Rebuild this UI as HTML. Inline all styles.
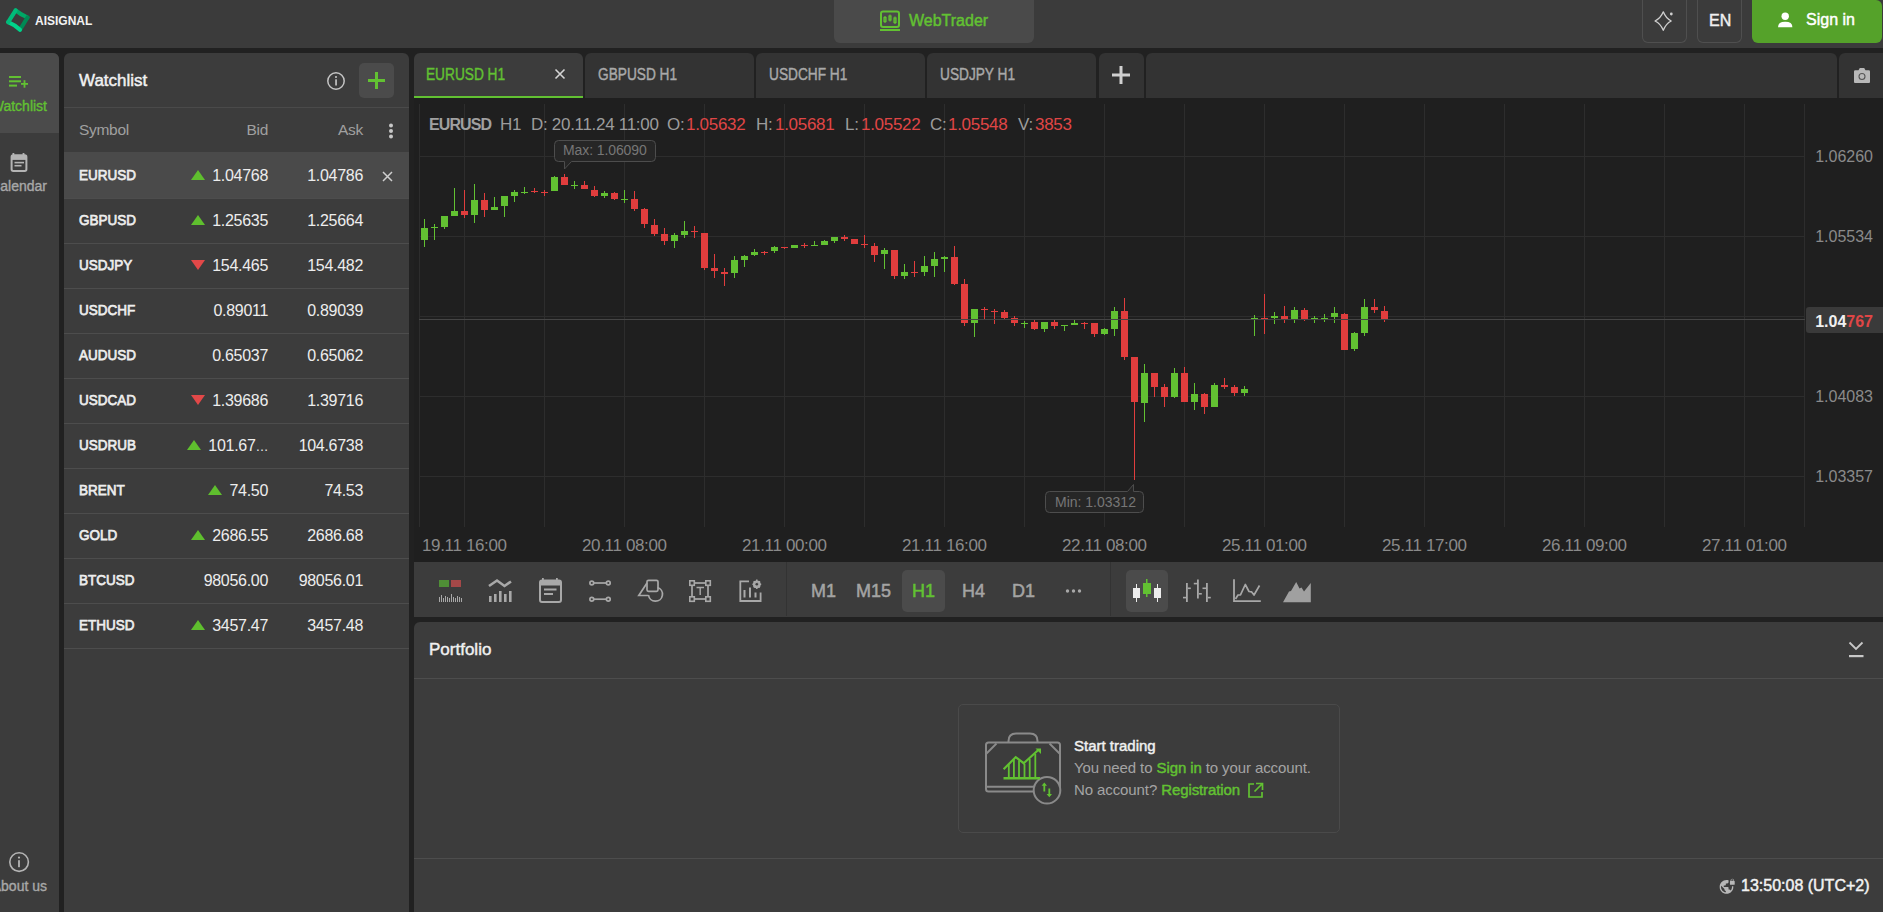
<!DOCTYPE html>
<html><head><meta charset="utf-8"><title>WebTrader</title>
<style>
*{box-sizing:border-box;margin:0;padding:0}
html,body{width:1883px;height:912px;overflow:hidden;background:#212121;font-family:"Liberation Sans",sans-serif;color:#e8e8e8}
.a{position:absolute}
.nw{white-space:nowrap}
.g{color:#62c132}
.topbar{left:0;top:0;width:1883px;height:48px;background:#3b3b3b}
.btnb{border:1px solid #4f4f4f;border-top:none;border-radius:0 0 6px 6px}
.side{left:0;top:53px;width:59px;height:859px;background:#3c3c3c;border-radius:0 6px 0 0;overflow:hidden}
.sitem{left:0;width:59px;height:80px}
.slabel{right:12px;font-size:14px;color:#a8a8a8;white-space:nowrap;text-align:right;-webkit-text-stroke:0.35px currentColor}
.wl{left:64px;top:53px;width:345px;height:859px;background:#3c3c3c;border-radius:6px 6px 0 0}
.row{left:0;width:345px;height:45px;border-bottom:1px solid #4a4a4a}
.sym{left:15px;top:14px;font-weight:bold;font-size:14px;letter-spacing:-0.35px;color:#ececec}
.bid{right:141px;top:14px;font-size:15px;color:#ececec;text-align:right}
.ask{right:46px;top:14px;font-size:15px;color:#ececec;text-align:right}
.tri-up{width:0;height:0;border-left:6px solid transparent;border-right:6px solid transparent;border-bottom:9px solid #5fbf2e}
.tri-dn{width:0;height:0;border-left:6px solid transparent;border-right:6px solid transparent;border-top:9px solid #e04545}
.tab{top:53px;height:45px;background:#333333;border-radius:6px 6px 0 0}
.tabt{left:13px;top:14px;font-size:15px;font-weight:bold;letter-spacing:-0.3px;color:#a9a9a9;white-space:nowrap}
.chart{left:414px;top:98px;width:1469px;height:464px;background:#1f1f1f}
.tool{left:414px;top:562px;width:1469px;height:55px;background:#3c3c3c}
.port{left:414px;top:622px;width:1469px;height:290px;background:#3c3c3c;border-radius:6px 0 0 0}
</style></head><body>
<div class="a topbar">
 <svg class="a" style="left:4px;top:6px" width="30" height="30" viewBox="0 0 30 30">
  <path d="M11.6 4.3 Q 16.5 8.3 23.5 11.5" stroke="#00a866" stroke-width="4.1" fill="none" stroke-linecap="round"/>
  <path d="M23.5 11.5 L 16 23.8" stroke="#008a55" stroke-width="4.1" fill="none" stroke-linecap="round"/>
  <path d="M16 23.8 Q 11 19 4.2 16.2" stroke="#00d28a" stroke-width="4.1" fill="none" stroke-linecap="round"/>
  <path d="M4.2 16.2 L 11.6 4.3" stroke="#00bb7a" stroke-width="4.1" fill="none" stroke-linecap="round"/>
 </svg>
 <div class="a nw" style="left:35px;top:14px;font-size:12px;font-weight:bold;color:#f2f2f2;letter-spacing:0px">AISIGNAL</div>
 <div class="a" style="left:834px;top:0;width:200px;height:43px;background:#4a4a4a;border-radius:0 0 6px 6px"></div>
 <svg class="a" style="left:879px;top:10px" width="22" height="22" viewBox="0 0 22 22">
  <rect x="2" y="1.5" width="18" height="15.5" rx="2" fill="none" stroke="#62c132" stroke-width="2"/>
  <rect x="1" y="19" width="20" height="2" fill="#62c132"/>
  <line x1="6" y1="6" x2="6" y2="13" stroke="#62c132" stroke-width="1.2"/><rect x="5" y="7.5" width="2" height="4" fill="none" stroke="#62c132" stroke-width="1.2"/>
  <line x1="11" y1="4.5" x2="11" y2="11.5" stroke="#62c132" stroke-width="1.2"/><rect x="10" y="6" width="2" height="4" fill="none" stroke="#62c132" stroke-width="1.2"/>
  <line x1="16" y1="6.5" x2="16" y2="14" stroke="#62c132" stroke-width="1.2"/><rect x="15" y="8" width="2" height="4.5" fill="none" stroke="#62c132" stroke-width="1.2"/>
 </svg>
 <div class="a nw g" style="left:909px;top:12px;font-size:16px;-webkit-text-stroke:0.45px currentColor;letter-spacing:0px">WebTrader</div>
 <div class="a btnb" style="left:1642px;top:0;width:45px;height:43px"></div>
 <svg class="a" style="left:1652px;top:10px" width="24" height="24" viewBox="0 0 24 24">
  <path d="M11.3 1.8 Q 13.9 8.4 19.2 11 Q 13.9 13.6 11.3 20.3 Q 8.6 13.6 3 11 Q 8.6 8.4 11.3 1.8 Z" fill="none" stroke="#cfcfcf" stroke-width="1.3" stroke-linejoin="round"/>
  <circle cx="19.3" cy="4" r="1.4" fill="#cfcfcf"/>
 </svg>
 <div class="a btnb" style="left:1697px;top:0;width:45px;height:43px"></div>
 <div class="a nw" style="left:1709px;top:12px;font-size:16px;-webkit-text-stroke:0.45px currentColor;color:#f0f0f0">EN</div>
 <div class="a" style="left:1752px;top:0;width:130px;height:43px;background:#55a22a;border-radius:0 6px 6px 6px"></div>
 <svg class="a" style="left:1776px;top:12px" width="18" height="17" viewBox="0 0 18 17">
  <circle cx="9.2" cy="4.3" r="3.7" fill="#fff"/>
  <path d="M2 15.2 Q 2 9.8 9.2 9.8 Q 16.4 9.8 16.4 15.2 Z" fill="#fff"/>
 </svg>
 <div class="a nw" style="left:1806px;top:11px;font-size:16px;-webkit-text-stroke:0.45px currentColor;color:#fff">Sign in</div>
</div>
<div class="a side">
 <div class="a sitem" style="top:0;background:#4b4b4b"></div>
 <svg class="a" style="left:8px;top:22px" width="22" height="14" viewBox="0 0 22 14">
  <rect x="1" y="1" width="12" height="2" fill="#62c132"/>
  <rect x="1" y="5.3" width="12" height="2" fill="#62c132"/>
  <rect x="1" y="9.6" width="8" height="2" fill="#62c132"/>
  <rect x="13" y="8" width="7" height="1.8" fill="#62c132"/>
  <rect x="15.6" y="5.2" width="1.8" height="7.5" fill="#62c132"/>
 </svg>
 <div class="a slabel g" style="top:45px;font-size:14px;right:12px;color:#62c132">Watchlist</div>
 <svg class="a" style="left:9px;top:99px" width="20" height="22" viewBox="0 0 20 22">
  <rect x="3.5" y="1" width="1.8" height="3" fill="#b4b4b4"/><rect x="13.6" y="1" width="1.8" height="3" fill="#b4b4b4"/>
  <rect x="2.6" y="3.3" width="14.8" height="15.6" rx="1.6" fill="none" stroke="#b4b4b4" stroke-width="2"/>
  <rect x="2.6" y="3.3" width="14.8" height="4.6" fill="#b4b4b4"/>
  <rect x="5.5" y="9.8" width="9.5" height="1.6" fill="#b4b4b4"/><rect x="5.5" y="12.9" width="7" height="1.6" fill="#b4b4b4"/>
 </svg>
 <div class="a slabel" style="top:125px">Calendar</div>
 <svg class="a" style="left:8px;top:798px" width="22" height="22" viewBox="0 0 22 22">
  <circle cx="11.1" cy="11.1" r="9.3" fill="none" stroke="#b4b4b4" stroke-width="1.6"/>
  <rect x="10.1" y="9.2" width="1.8" height="7" fill="#b4b4b4"/><circle cx="11" cy="6.6" r="1.1" fill="#b4b4b4"/>
 </svg>
 <div class="a slabel" style="top:825px">About us</div>
</div>
<div class="a wl">
 <div class="a nw" style="left:15px;top:18px;font-size:17px;-webkit-text-stroke:0.45px currentColor;color:#f2f2f2">Watchlist</div>
 <svg class="a" style="left:262px;top:18px" width="20" height="20" viewBox="0 0 20 20">
  <circle cx="10" cy="10" r="8.2" fill="none" stroke="#c4c4c4" stroke-width="1.5"/>
  <rect x="9.2" y="8.3" width="1.7" height="6.2" fill="#c4c4c4"/><circle cx="10" cy="6" r="1.05" fill="#c4c4c4"/>
 </svg>
 <div class="a" style="left:295px;top:10px;width:35px;height:35px;background:#4b4b4b;border-radius:5px"></div>
 <svg class="a" style="left:303px;top:18px" width="19" height="19" viewBox="0 0 19 19">
  <rect x="1" y="8" width="17" height="3" fill="#62c132"/><rect x="8" y="1" width="3" height="17" fill="#62c132"/>
 </svg>
 <div class="a" style="left:0;top:54px;width:345px;height:1px;background:#4a4a4a"></div>
 <div class="a nw" style="left:15px;top:68px;font-size:15.5px;letter-spacing:-0.3px;color:#a0a0a0">Symbol</div>
 <div class="a nw" style="right:141px;top:68px;font-size:15.5px;letter-spacing:-0.3px;color:#a0a0a0">Bid</div>
 <div class="a nw" style="right:46px;top:68px;font-size:15.5px;letter-spacing:-0.3px;color:#a0a0a0">Ask</div>
 <svg class="a" style="left:324px;top:70px" width="6" height="16" viewBox="0 0 6 16">
  <circle cx="3" cy="2.5" r="2" fill="#c8c8c8"/><circle cx="3" cy="8" r="2" fill="#c8c8c8"/><circle cx="3" cy="13.5" r="2" fill="#c8c8c8"/>
 </svg>
<div class="a" style="left:0;top:99px;width:345px;height:47px;background:#4a4a4a"></div>
<div class="a" style="left:0;top:145px;width:345px;height:1px;background:#4d4d4d"></div>
<div class="a nw" style="left:15px;top:113px;font-size:15.5px;-webkit-text-stroke:0.75px currentColor;color:#ededed;transform:scaleX(0.87);transform-origin:0 0">EURUSD</div>
<div class="a nw" style="right:141px;top:114px;font-size:16px;letter-spacing:-0.3px;color:#ededed;text-align:right"><span style="display:inline-block;width:0;height:0;border-left:7px solid transparent;border-right:7px solid transparent;border-bottom:10px solid #5fbf2e;margin-right:7px;vertical-align:1px"></span>1.04768</div>
<div class="a nw" style="right:46px;top:114px;font-size:16px;letter-spacing:-0.3px;color:#ededed;text-align:right">1.04786</div>
<svg class="a" style="left:318px;top:118px" width="11" height="11" viewBox="0 0 11 11"><path d="M1 1 L10 10 M10 1 L1 10" stroke="#cfcfcf" stroke-width="1.5"/></svg>
<div class="a" style="left:0;top:190px;width:345px;height:1px;background:#4d4d4d"></div>
<div class="a nw" style="left:15px;top:158px;font-size:15.5px;-webkit-text-stroke:0.75px currentColor;color:#ededed;transform:scaleX(0.87);transform-origin:0 0">GBPUSD</div>
<div class="a nw" style="right:141px;top:159px;font-size:16px;letter-spacing:-0.3px;color:#ededed;text-align:right"><span style="display:inline-block;width:0;height:0;border-left:7px solid transparent;border-right:7px solid transparent;border-bottom:10px solid #5fbf2e;margin-right:7px;vertical-align:1px"></span>1.25635</div>
<div class="a nw" style="right:46px;top:159px;font-size:16px;letter-spacing:-0.3px;color:#ededed;text-align:right">1.25664</div>
<div class="a" style="left:0;top:235px;width:345px;height:1px;background:#4d4d4d"></div>
<div class="a nw" style="left:15px;top:203px;font-size:15.5px;-webkit-text-stroke:0.75px currentColor;color:#ededed;transform:scaleX(0.87);transform-origin:0 0">USDJPY</div>
<div class="a nw" style="right:141px;top:204px;font-size:16px;letter-spacing:-0.3px;color:#ededed;text-align:right"><span style="display:inline-block;width:0;height:0;border-left:7px solid transparent;border-right:7px solid transparent;border-top:10px solid #e24848;margin-right:7px;vertical-align:1px"></span>154.465</div>
<div class="a nw" style="right:46px;top:204px;font-size:16px;letter-spacing:-0.3px;color:#ededed;text-align:right">154.482</div>
<div class="a" style="left:0;top:280px;width:345px;height:1px;background:#4d4d4d"></div>
<div class="a nw" style="left:15px;top:248px;font-size:15.5px;-webkit-text-stroke:0.75px currentColor;color:#ededed;transform:scaleX(0.87);transform-origin:0 0">USDCHF</div>
<div class="a nw" style="right:141px;top:249px;font-size:16px;letter-spacing:-0.3px;color:#ededed;text-align:right">0.89011</div>
<div class="a nw" style="right:46px;top:249px;font-size:16px;letter-spacing:-0.3px;color:#ededed;text-align:right">0.89039</div>
<div class="a" style="left:0;top:325px;width:345px;height:1px;background:#4d4d4d"></div>
<div class="a nw" style="left:15px;top:293px;font-size:15.5px;-webkit-text-stroke:0.75px currentColor;color:#ededed;transform:scaleX(0.87);transform-origin:0 0">AUDUSD</div>
<div class="a nw" style="right:141px;top:294px;font-size:16px;letter-spacing:-0.3px;color:#ededed;text-align:right">0.65037</div>
<div class="a nw" style="right:46px;top:294px;font-size:16px;letter-spacing:-0.3px;color:#ededed;text-align:right">0.65062</div>
<div class="a" style="left:0;top:370px;width:345px;height:1px;background:#4d4d4d"></div>
<div class="a nw" style="left:15px;top:338px;font-size:15.5px;-webkit-text-stroke:0.75px currentColor;color:#ededed;transform:scaleX(0.87);transform-origin:0 0">USDCAD</div>
<div class="a nw" style="right:141px;top:339px;font-size:16px;letter-spacing:-0.3px;color:#ededed;text-align:right"><span style="display:inline-block;width:0;height:0;border-left:7px solid transparent;border-right:7px solid transparent;border-top:10px solid #e24848;margin-right:7px;vertical-align:1px"></span>1.39686</div>
<div class="a nw" style="right:46px;top:339px;font-size:16px;letter-spacing:-0.3px;color:#ededed;text-align:right">1.39716</div>
<div class="a" style="left:0;top:415px;width:345px;height:1px;background:#4d4d4d"></div>
<div class="a nw" style="left:15px;top:383px;font-size:15.5px;-webkit-text-stroke:0.75px currentColor;color:#ededed;transform:scaleX(0.87);transform-origin:0 0">USDRUB</div>
<div class="a nw" style="right:141px;top:384px;font-size:16px;letter-spacing:-0.3px;color:#ededed;text-align:right"><span style="display:inline-block;width:0;height:0;border-left:7px solid transparent;border-right:7px solid transparent;border-bottom:10px solid #5fbf2e;margin-right:7px;vertical-align:1px"></span>101.67<span style="font-size:13px;letter-spacing:-0.5px">…</span></div>
<div class="a nw" style="right:46px;top:384px;font-size:16px;letter-spacing:-0.3px;color:#ededed;text-align:right">104.6738</div>
<div class="a" style="left:0;top:460px;width:345px;height:1px;background:#4d4d4d"></div>
<div class="a nw" style="left:15px;top:428px;font-size:15.5px;-webkit-text-stroke:0.75px currentColor;color:#ededed;transform:scaleX(0.87);transform-origin:0 0">BRENT</div>
<div class="a nw" style="right:141px;top:429px;font-size:16px;letter-spacing:-0.3px;color:#ededed;text-align:right"><span style="display:inline-block;width:0;height:0;border-left:7px solid transparent;border-right:7px solid transparent;border-bottom:10px solid #5fbf2e;margin-right:7px;vertical-align:1px"></span>74.50</div>
<div class="a nw" style="right:46px;top:429px;font-size:16px;letter-spacing:-0.3px;color:#ededed;text-align:right">74.53</div>
<div class="a" style="left:0;top:505px;width:345px;height:1px;background:#4d4d4d"></div>
<div class="a nw" style="left:15px;top:473px;font-size:15.5px;-webkit-text-stroke:0.75px currentColor;color:#ededed;transform:scaleX(0.87);transform-origin:0 0">GOLD</div>
<div class="a nw" style="right:141px;top:474px;font-size:16px;letter-spacing:-0.3px;color:#ededed;text-align:right"><span style="display:inline-block;width:0;height:0;border-left:7px solid transparent;border-right:7px solid transparent;border-bottom:10px solid #5fbf2e;margin-right:7px;vertical-align:1px"></span>2686.55</div>
<div class="a nw" style="right:46px;top:474px;font-size:16px;letter-spacing:-0.3px;color:#ededed;text-align:right">2686.68</div>
<div class="a" style="left:0;top:550px;width:345px;height:1px;background:#4d4d4d"></div>
<div class="a nw" style="left:15px;top:518px;font-size:15.5px;-webkit-text-stroke:0.75px currentColor;color:#ededed;transform:scaleX(0.87);transform-origin:0 0">BTCUSD</div>
<div class="a nw" style="right:141px;top:519px;font-size:16px;letter-spacing:-0.3px;color:#ededed;text-align:right">98056.00</div>
<div class="a nw" style="right:46px;top:519px;font-size:16px;letter-spacing:-0.3px;color:#ededed;text-align:right">98056.01</div>
<div class="a" style="left:0;top:595px;width:345px;height:1px;background:#4d4d4d"></div>
<div class="a nw" style="left:15px;top:563px;font-size:15.5px;-webkit-text-stroke:0.75px currentColor;color:#ededed;transform:scaleX(0.87);transform-origin:0 0">ETHUSD</div>
<div class="a nw" style="right:141px;top:564px;font-size:16px;letter-spacing:-0.3px;color:#ededed;text-align:right"><span style="display:inline-block;width:0;height:0;border-left:7px solid transparent;border-right:7px solid transparent;border-bottom:10px solid #5fbf2e;margin-right:7px;vertical-align:1px"></span>3457.47</div>
<div class="a nw" style="right:46px;top:564px;font-size:16px;letter-spacing:-0.3px;color:#ededed;text-align:right">3457.48</div>
</div>
<div class="a tab" style="left:414px;width:169px;background:#3c3c3c"></div>
<div class="a" style="left:414px;top:96px;width:169px;height:2px;background:#62c132"></div>
<div class="a nw g" style="left:426px;top:66px;font-size:16px;-webkit-text-stroke:0.4px currentColor;transform:scaleX(0.855);transform-origin:0 0">EURUSD H1</div>
<svg class="a" style="left:554px;top:68px" width="12" height="12" viewBox="0 0 12 12"><path d="M1.5 1.5 L10.5 10.5 M10.5 1.5 L1.5 10.5" stroke="#d4d4d4" stroke-width="1.6"/></svg>
<div class="a tab" style="left:585px;width:169px"></div>
<div class="a nw" style="left:598px;top:66px;font-size:16px;-webkit-text-stroke:0.4px currentColor;transform:scaleX(0.855);transform-origin:0 0;color:#a9a9a9">GBPUSD H1</div>
<div class="a tab" style="left:756px;width:169px"></div>
<div class="a nw" style="left:769px;top:66px;font-size:16px;-webkit-text-stroke:0.4px currentColor;transform:scaleX(0.855);transform-origin:0 0;color:#a9a9a9">USDCHF H1</div>
<div class="a tab" style="left:927px;width:169px"></div>
<div class="a nw" style="left:940px;top:66px;font-size:16px;-webkit-text-stroke:0.4px currentColor;transform:scaleX(0.855);transform-origin:0 0;color:#a9a9a9">USDJPY H1</div>
<div class="a tab" style="left:1099px;width:45px"></div>
<svg class="a" style="left:1112px;top:66px" width="18" height="18" viewBox="0 0 18 18"><rect x="0" y="7.5" width="18" height="3" fill="#d0d0d0"/><rect x="7.5" y="0" width="3" height="18" fill="#d0d0d0"/></svg>
<div class="a tab" style="left:1146px;width:691px"></div>
<div class="a tab" style="left:1839px;width:50px"></div>
<svg class="a" style="left:1853px;top:67px" width="18" height="17" viewBox="0 0 18 17">
 <path d="M1 4.5 Q1 3.3 2.2 3.3 H5.5 L6.8 1 H11.2 L12.5 3.3 H15.8 Q17 3.3 17 4.5 V15 Q17 16 16 16 H2 Q1 16 1 15 Z" fill="#b8b8b8"/>
 <circle cx="9" cy="9.5" r="3" fill="none" stroke="#555555" stroke-width="1.1"/>
</svg>
<svg class="a" style="left:414px;top:98px" width="1469" height="464" viewBox="414 98 1469 464">
<rect x="414" y="98" width="1469" height="464" fill="#1f1f1f"/>
<rect x="419" y="104" width="1" height="423" fill="#2d2d2d"/>
<rect x="464" y="104" width="1" height="423" fill="#2d2d2d"/>
<rect x="544" y="104" width="1" height="423" fill="#2d2d2d"/>
<rect x="624" y="104" width="1" height="423" fill="#2d2d2d"/>
<rect x="704" y="104" width="1" height="423" fill="#2d2d2d"/>
<rect x="784" y="104" width="1" height="423" fill="#2d2d2d"/>
<rect x="864" y="104" width="1" height="423" fill="#2d2d2d"/>
<rect x="944" y="104" width="1" height="423" fill="#2d2d2d"/>
<rect x="1024" y="104" width="1" height="423" fill="#2d2d2d"/>
<rect x="1104" y="104" width="1" height="423" fill="#2d2d2d"/>
<rect x="1184" y="104" width="1" height="423" fill="#2d2d2d"/>
<rect x="1264" y="104" width="1" height="423" fill="#2d2d2d"/>
<rect x="1344" y="104" width="1" height="423" fill="#2d2d2d"/>
<rect x="1424" y="104" width="1" height="423" fill="#2d2d2d"/>
<rect x="1504" y="104" width="1" height="423" fill="#2d2d2d"/>
<rect x="1584" y="104" width="1" height="423" fill="#2d2d2d"/>
<rect x="1664" y="104" width="1" height="423" fill="#2d2d2d"/>
<rect x="1744" y="104" width="1" height="423" fill="#2d2d2d"/>
<rect x="1804" y="104" width="1" height="423" fill="#2d2d2d"/>
<rect x="419" y="156" width="1385" height="1" fill="#2d2d2d"/>
<rect x="419" y="236" width="1385" height="1" fill="#2d2d2d"/>
<rect x="419" y="316" width="1385" height="1" fill="#2d2d2d"/>
<rect x="419" y="396" width="1385" height="1" fill="#2d2d2d"/>
<rect x="419" y="476" width="1385" height="1" fill="#2d2d2d"/>
<rect x="424" y="219" width="1" height="28" fill="#62c132"/><rect x="421" y="228" width="7" height="12" fill="#62c132"/><rect x="434" y="224" width="1" height="16" fill="#62c132"/><rect x="431" y="227" width="7" height="1" fill="#62c132"/><rect x="444" y="216" width="1" height="13" fill="#62c132"/><rect x="441" y="216" width="7" height="11" fill="#62c132"/><rect x="454" y="188" width="1" height="28" fill="#62c132"/><rect x="451" y="211" width="7" height="5" fill="#62c132"/><rect x="464" y="190" width="1" height="28" fill="#e03d3d"/><rect x="461" y="211" width="7" height="4" fill="#e03d3d"/><rect x="474" y="184" width="1" height="39" fill="#62c132"/><rect x="471" y="200" width="7" height="15" fill="#62c132"/><rect x="484" y="193" width="1" height="24" fill="#e03d3d"/><rect x="481" y="200" width="7" height="10" fill="#e03d3d"/><rect x="494" y="197" width="1" height="11" fill="#62c132"/><rect x="491" y="207" width="7" height="3" fill="#62c132"/><rect x="504" y="196" width="1" height="21" fill="#62c132"/><rect x="501" y="196" width="7" height="10" fill="#62c132"/><rect x="514" y="190" width="1" height="12" fill="#62c132"/><rect x="511" y="192" width="7" height="4" fill="#62c132"/><rect x="524" y="187" width="1" height="7" fill="#62c132"/><rect x="521" y="192" width="7" height="1" fill="#62c132"/><rect x="534" y="188" width="1" height="5" fill="#e03d3d"/><rect x="531" y="191" width="7" height="1" fill="#e03d3d"/><rect x="544" y="190" width="1" height="6" fill="#e03d3d"/><rect x="541" y="192" width="7" height="1" fill="#e03d3d"/><rect x="554" y="176" width="1" height="15" fill="#62c132"/><rect x="551" y="177" width="7" height="14" fill="#62c132"/><rect x="564" y="174" width="1" height="11" fill="#e03d3d"/><rect x="561" y="177" width="7" height="8" fill="#e03d3d"/><rect x="574" y="181" width="1" height="8" fill="#62c132"/><rect x="571" y="185" width="7" height="1" fill="#62c132"/><rect x="584" y="181" width="1" height="8" fill="#e03d3d"/><rect x="581" y="185" width="7" height="4" fill="#e03d3d"/><rect x="594" y="186" width="1" height="11" fill="#e03d3d"/><rect x="591" y="190" width="7" height="6" fill="#e03d3d"/><rect x="604" y="191" width="1" height="7" fill="#62c132"/><rect x="601" y="193" width="7" height="3" fill="#62c132"/><rect x="614" y="192" width="1" height="8" fill="#e03d3d"/><rect x="611" y="193" width="7" height="6" fill="#e03d3d"/><rect x="624" y="190" width="1" height="13" fill="#62c132"/><rect x="621" y="199" width="7" height="1" fill="#62c132"/><rect x="634" y="191" width="1" height="20" fill="#e03d3d"/><rect x="631" y="199" width="7" height="10" fill="#e03d3d"/><rect x="644" y="208" width="1" height="20" fill="#e03d3d"/><rect x="641" y="209" width="7" height="15" fill="#e03d3d"/><rect x="654" y="219" width="1" height="17" fill="#e03d3d"/><rect x="651" y="225" width="7" height="9" fill="#e03d3d"/><rect x="664" y="228" width="1" height="17" fill="#e03d3d"/><rect x="661" y="234" width="7" height="7" fill="#e03d3d"/><rect x="674" y="233" width="1" height="15" fill="#62c132"/><rect x="671" y="235" width="7" height="6" fill="#62c132"/><rect x="684" y="221" width="1" height="17" fill="#62c132"/><rect x="681" y="231" width="7" height="4" fill="#62c132"/><rect x="694" y="226" width="1" height="12" fill="#e03d3d"/><rect x="691" y="231" width="7" height="1" fill="#e03d3d"/><rect x="704" y="233" width="1" height="37" fill="#e03d3d"/><rect x="701" y="233" width="7" height="35" fill="#e03d3d"/><rect x="714" y="254" width="1" height="24" fill="#e03d3d"/><rect x="711" y="268" width="7" height="3" fill="#e03d3d"/><rect x="724" y="268" width="1" height="18" fill="#e03d3d"/><rect x="721" y="272" width="7" height="2" fill="#e03d3d"/><rect x="734" y="256" width="1" height="22" fill="#62c132"/><rect x="731" y="260" width="7" height="13" fill="#62c132"/><rect x="744" y="255" width="1" height="12" fill="#62c132"/><rect x="741" y="256" width="7" height="4" fill="#62c132"/><rect x="754" y="249" width="1" height="7" fill="#62c132"/><rect x="751" y="252" width="7" height="3" fill="#62c132"/><rect x="764" y="251" width="1" height="4" fill="#e03d3d"/><rect x="761" y="252" width="7" height="1" fill="#e03d3d"/><rect x="774" y="246" width="1" height="7" fill="#62c132"/><rect x="771" y="247" width="7" height="4" fill="#62c132"/><rect x="784" y="247" width="1" height="2" fill="#e03d3d"/><rect x="781" y="247" width="7" height="1" fill="#e03d3d"/><rect x="794" y="245" width="1" height="3" fill="#62c132"/><rect x="791" y="245" width="7" height="3" fill="#62c132"/><rect x="804" y="243" width="1" height="5" fill="#e03d3d"/><rect x="801" y="245" width="7" height="1" fill="#e03d3d"/><rect x="814" y="241" width="1" height="5" fill="#62c132"/><rect x="811" y="245" width="7" height="1" fill="#62c132"/><rect x="824" y="240" width="1" height="5" fill="#62c132"/><rect x="821" y="241" width="7" height="4" fill="#62c132"/><rect x="834" y="237" width="1" height="6" fill="#62c132"/><rect x="831" y="237" width="7" height="4" fill="#62c132"/><rect x="844" y="235" width="1" height="6" fill="#e03d3d"/><rect x="841" y="237" width="7" height="2" fill="#e03d3d"/><rect x="854" y="239" width="1" height="5" fill="#e03d3d"/><rect x="851" y="239" width="7" height="5" fill="#e03d3d"/><rect x="864" y="235" width="1" height="13" fill="#e03d3d"/><rect x="861" y="244" width="7" height="1" fill="#e03d3d"/><rect x="874" y="243" width="1" height="19" fill="#e03d3d"/><rect x="871" y="246" width="7" height="9" fill="#e03d3d"/><rect x="884" y="248" width="1" height="21" fill="#62c132"/><rect x="881" y="250" width="7" height="4" fill="#62c132"/><rect x="894" y="250" width="1" height="29" fill="#e03d3d"/><rect x="891" y="250" width="7" height="26" fill="#e03d3d"/><rect x="904" y="264" width="1" height="15" fill="#62c132"/><rect x="901" y="272" width="7" height="4" fill="#62c132"/><rect x="914" y="261" width="1" height="16" fill="#e03d3d"/><rect x="911" y="272" width="7" height="1" fill="#e03d3d"/><rect x="924" y="256" width="1" height="20" fill="#62c132"/><rect x="921" y="266" width="7" height="6" fill="#62c132"/><rect x="934" y="252" width="1" height="25" fill="#62c132"/><rect x="931" y="259" width="7" height="7" fill="#62c132"/><rect x="944" y="256" width="1" height="16" fill="#62c132"/><rect x="941" y="257" width="7" height="2" fill="#62c132"/><rect x="954" y="246" width="1" height="39" fill="#e03d3d"/><rect x="951" y="257" width="7" height="27" fill="#e03d3d"/><rect x="964" y="279" width="1" height="47" fill="#e03d3d"/><rect x="961" y="284" width="7" height="39" fill="#e03d3d"/><rect x="974" y="309" width="1" height="28" fill="#62c132"/><rect x="971" y="309" width="7" height="14" fill="#62c132"/><rect x="984" y="307" width="1" height="12" fill="#e03d3d"/><rect x="981" y="309" width="7" height="1" fill="#e03d3d"/><rect x="994" y="309" width="1" height="15" fill="#e03d3d"/><rect x="991" y="311" width="7" height="1" fill="#e03d3d"/><rect x="1004" y="310" width="1" height="9" fill="#e03d3d"/><rect x="1001" y="312" width="7" height="6" fill="#e03d3d"/><rect x="1014" y="316" width="1" height="10" fill="#e03d3d"/><rect x="1011" y="318" width="7" height="5" fill="#e03d3d"/><rect x="1024" y="321" width="1" height="7" fill="#62c132"/><rect x="1021" y="323" width="7" height="1" fill="#62c132"/><rect x="1034" y="320" width="1" height="10" fill="#e03d3d"/><rect x="1031" y="322" width="7" height="7" fill="#e03d3d"/><rect x="1044" y="322" width="1" height="10" fill="#62c132"/><rect x="1041" y="322" width="7" height="7" fill="#62c132"/><rect x="1054" y="320" width="1" height="9" fill="#e03d3d"/><rect x="1051" y="322" width="7" height="4" fill="#e03d3d"/><rect x="1064" y="325" width="1" height="6" fill="#62c132"/><rect x="1061" y="325" width="7" height="1" fill="#62c132"/><rect x="1074" y="320" width="1" height="5" fill="#62c132"/><rect x="1071" y="323" width="7" height="2" fill="#62c132"/><rect x="1084" y="322" width="1" height="7" fill="#e03d3d"/><rect x="1081" y="323" width="7" height="1" fill="#e03d3d"/><rect x="1094" y="323" width="1" height="14" fill="#e03d3d"/><rect x="1091" y="323" width="7" height="11" fill="#e03d3d"/><rect x="1104" y="328" width="1" height="7" fill="#62c132"/><rect x="1101" y="329" width="7" height="5" fill="#62c132"/><rect x="1114" y="307" width="1" height="29" fill="#62c132"/><rect x="1111" y="311" width="7" height="18" fill="#62c132"/><rect x="1124" y="298" width="1" height="62" fill="#e03d3d"/><rect x="1121" y="311" width="7" height="46" fill="#e03d3d"/><rect x="1134" y="357" width="1" height="123" fill="#e03d3d"/><rect x="1131" y="357" width="7" height="45" fill="#e03d3d"/><rect x="1144" y="364" width="1" height="58" fill="#62c132"/><rect x="1141" y="373" width="7" height="30" fill="#62c132"/><rect x="1154" y="373" width="1" height="24" fill="#e03d3d"/><rect x="1151" y="373" width="7" height="14" fill="#e03d3d"/><rect x="1164" y="384" width="1" height="23" fill="#e03d3d"/><rect x="1161" y="387" width="7" height="10" fill="#e03d3d"/><rect x="1174" y="368" width="1" height="30" fill="#62c132"/><rect x="1171" y="373" width="7" height="24" fill="#62c132"/><rect x="1184" y="367" width="1" height="35" fill="#e03d3d"/><rect x="1181" y="373" width="7" height="29" fill="#e03d3d"/><rect x="1194" y="383" width="1" height="27" fill="#62c132"/><rect x="1191" y="394" width="7" height="8" fill="#62c132"/><rect x="1204" y="393" width="1" height="21" fill="#e03d3d"/><rect x="1201" y="394" width="7" height="13" fill="#e03d3d"/><rect x="1214" y="383" width="1" height="24" fill="#62c132"/><rect x="1211" y="385" width="7" height="22" fill="#62c132"/><rect x="1224" y="378" width="1" height="11" fill="#e03d3d"/><rect x="1221" y="385" width="7" height="2" fill="#e03d3d"/><rect x="1234" y="385" width="1" height="11" fill="#e03d3d"/><rect x="1231" y="387" width="7" height="6" fill="#e03d3d"/><rect x="1244" y="386" width="1" height="10" fill="#62c132"/><rect x="1241" y="389" width="7" height="4" fill="#62c132"/><rect x="1254" y="315" width="1" height="21" fill="#62c132"/><rect x="1251" y="318" width="7" height="1" fill="#62c132"/><rect x="1264" y="294" width="1" height="40" fill="#e03d3d"/><rect x="1261" y="318" width="7" height="1" fill="#e03d3d"/><rect x="1274" y="312" width="1" height="12" fill="#62c132"/><rect x="1271" y="316" width="7" height="2" fill="#62c132"/><rect x="1284" y="306" width="1" height="17" fill="#e03d3d"/><rect x="1281" y="316" width="7" height="3" fill="#e03d3d"/><rect x="1294" y="307" width="1" height="16" fill="#62c132"/><rect x="1291" y="310" width="7" height="9" fill="#62c132"/><rect x="1304" y="308" width="1" height="13" fill="#e03d3d"/><rect x="1301" y="310" width="7" height="9" fill="#e03d3d"/><rect x="1314" y="316" width="1" height="7" fill="#62c132"/><rect x="1311" y="318" width="7" height="1" fill="#62c132"/><rect x="1324" y="314" width="1" height="8" fill="#62c132"/><rect x="1321" y="318" width="7" height="1" fill="#62c132"/><rect x="1334" y="307" width="1" height="16" fill="#62c132"/><rect x="1331" y="313" width="7" height="4" fill="#62c132"/><rect x="1344" y="313" width="1" height="37" fill="#e03d3d"/><rect x="1341" y="314" width="7" height="36" fill="#e03d3d"/><rect x="1354" y="332" width="1" height="19" fill="#62c132"/><rect x="1351" y="333" width="7" height="16" fill="#62c132"/><rect x="1364" y="299" width="1" height="37" fill="#62c132"/><rect x="1361" y="307" width="7" height="26" fill="#62c132"/><rect x="1374" y="299" width="1" height="14" fill="#e03d3d"/><rect x="1371" y="307" width="7" height="3" fill="#e03d3d"/><rect x="1384" y="306" width="1" height="16" fill="#e03d3d"/><rect x="1381" y="311" width="7" height="8" fill="#e03d3d"/>
<rect x="419" y="319" width="1386" height="1" fill="#454545"/>
<rect x="1806" y="307" width="80" height="26" rx="3" fill="#3a3a3a"/>
<path d="M558.5 140.5 H651.5 Q655.5 140.5 655.5 144.5 V157.5 Q655.5 161.5 651.5 161.5 H571.5 L564.5 169 L564.5 161.5 H558.5 Q554.5 161.5 554.5 157.5 V144.5 Q554.5 140.5 558.5 140.5 Z" fill="#262626" stroke="#4d4d4d" stroke-width="1"/>
<path d="M1049.5 491.5 H1127.5 L1133.5 484.5 L1133.5 491.5 H1139.5 Q1143.5 491.5 1143.5 495.5 V508.5 Q1143.5 512.5 1139.5 512.5 H1049.5 Q1045.5 512.5 1045.5 508.5 V495.5 Q1045.5 491.5 1049.5 491.5 Z" fill="#262626" stroke="#4d4d4d" stroke-width="1"/>
</svg>
<div class="a nw" style="left:429px;top:116px;font-size:16px;font-weight:bold;letter-spacing:-0.9px;color:#a0a0a0">EURUSD</div>
<div class="a nw" style="left:500px;top:115px;font-size:17px;letter-spacing:-0.3px;color:#9c9c9c">H1</div>
<div class="a nw" style="left:531px;top:115px;font-size:17px;letter-spacing:-0.3px;color:#9c9c9c">D: 20.11.24 11:00</div>
<div class="a nw" style="left:667px;top:115px;font-size:17px;letter-spacing:-0.3px;color:#9c9c9c">O:</div>
<div class="a nw" style="left:686px;top:115px;font-size:17px;letter-spacing:-0.3px;color:#e04646">1.05632</div>
<div class="a nw" style="left:756px;top:115px;font-size:17px;letter-spacing:-0.3px;color:#9c9c9c">H:</div>
<div class="a nw" style="left:775px;top:115px;font-size:17px;letter-spacing:-0.3px;color:#e04646">1.05681</div>
<div class="a nw" style="left:845px;top:115px;font-size:17px;letter-spacing:-0.3px;color:#9c9c9c">L:</div>
<div class="a nw" style="left:861px;top:115px;font-size:17px;letter-spacing:-0.3px;color:#e04646">1.05522</div>
<div class="a nw" style="left:930px;top:115px;font-size:17px;letter-spacing:-0.3px;color:#9c9c9c">C:</div>
<div class="a nw" style="left:948px;top:115px;font-size:17px;letter-spacing:-0.3px;color:#e04646">1.05548</div>
<div class="a nw" style="left:1018px;top:115px;font-size:17px;letter-spacing:-0.3px;color:#9c9c9c">V:</div>
<div class="a nw" style="left:1035px;top:115px;font-size:17px;letter-spacing:-0.3px;color:#e04646">3853</div>
<div class="a nw" style="left:563px;top:142px;font-size:14px;color:#767676;letter-spacing:-0.1px">Max: 1.06090</div>
<div class="a nw" style="left:1055px;top:494px;font-size:14px;color:#767676">Min: 1.03312</div>
<div class="a nw" style="right:10px;top:148px;font-size:16px;color:#8a8a8a">1.06260</div>
<div class="a nw" style="right:10px;top:228px;font-size:16px;color:#8a8a8a">1.05534</div>
<div class="a nw" style="right:10px;top:388px;font-size:16px;color:#8a8a8a">1.04083</div>
<div class="a nw" style="right:10px;top:468px;font-size:16px;color:#8a8a8a">1.03357</div>
<div class="a nw" style="right:10px;top:313px;font-size:16px;color:#f0f0f0;font-weight:bold">1.04<span style="color:#e04646">767</span></div>
<div class="a nw" style="left:422px;top:536px;font-size:17px;color:#8a8a8a;letter-spacing:-0.35px">19.11 16:00</div>
<div class="a nw" style="left:582px;top:536px;font-size:17px;color:#8a8a8a;letter-spacing:-0.35px">20.11 08:00</div>
<div class="a nw" style="left:742px;top:536px;font-size:17px;color:#8a8a8a;letter-spacing:-0.35px">21.11 00:00</div>
<div class="a nw" style="left:902px;top:536px;font-size:17px;color:#8a8a8a;letter-spacing:-0.35px">21.11 16:00</div>
<div class="a nw" style="left:1062px;top:536px;font-size:17px;color:#8a8a8a;letter-spacing:-0.35px">22.11 08:00</div>
<div class="a nw" style="left:1222px;top:536px;font-size:17px;color:#8a8a8a;letter-spacing:-0.35px">25.11 01:00</div>
<div class="a nw" style="left:1382px;top:536px;font-size:17px;color:#8a8a8a;letter-spacing:-0.35px">25.11 17:00</div>
<div class="a nw" style="left:1542px;top:536px;font-size:17px;color:#8a8a8a;letter-spacing:-0.35px">26.11 09:00</div>
<div class="a nw" style="left:1702px;top:536px;font-size:17px;color:#8a8a8a;letter-spacing:-0.35px">27.11 01:00</div><div class="a tool"></div>
<svg class="a" style="left:414px;top:562px" width="1469" height="54" viewBox="414 562 1469 54">
 <!-- icon1 -->
 <rect x="439" y="580" width="10" height="7" fill="#4f8e36"/><rect x="451" y="580" width="10" height="7" fill="#a44848"/>
 <g fill="#a8a8a8">
  <rect x="439" y="597" width="1" height="5"/><rect x="441" y="595" width="1" height="7"/><rect x="443" y="598" width="1" height="4"/>
  <rect x="445" y="596" width="1" height="6"/><rect x="447" y="597" width="1" height="5"/><rect x="449" y="598" width="1" height="4"/>
  <rect x="451" y="594" width="1" height="8"/><rect x="453" y="597" width="1" height="5"/><rect x="455" y="598" width="1" height="4"/>
  <rect x="457" y="596" width="1" height="6"/><rect x="459" y="597" width="1" height="5"/><rect x="461" y="598" width="1" height="4"/>
 </g>
 <!-- icon2 -->
 <path d="M489 586 L497 580.5 L504.5 586 L511 581.5" stroke="#a8a8a8" stroke-width="2.6" fill="none"/>
 <g fill="#a8a8a8"><rect x="489" y="596" width="2.6" height="6"/><rect x="494" y="594" width="2.6" height="8"/><rect x="499" y="591" width="2.6" height="11"/><rect x="504" y="594" width="2.6" height="8"/><rect x="509" y="591" width="2.6" height="11"/></g>
 <!-- icon3 calendar -->
 <rect x="542" y="578" width="1.8" height="3" fill="#a8a8a8"/><rect x="556" y="578" width="1.8" height="3" fill="#a8a8a8"/>
 <rect x="540" y="580.5" width="21" height="21.5" rx="2" fill="none" stroke="#a8a8a8" stroke-width="2"/>
 <rect x="540" y="580.5" width="21" height="5" fill="#a8a8a8"/>
 <rect x="544" y="588.5" width="12.5" height="2" fill="#a8a8a8"/><rect x="544" y="593" width="9" height="2" fill="#a8a8a8"/>
 <!-- icon4 -->
 <g stroke="#a8a8a8" stroke-width="1.7" fill="none">
  <line x1="594" y1="583" x2="606" y2="583"/><circle cx="591.8" cy="583" r="1.9"/><circle cx="608.3" cy="583" r="1.9"/>
  <line x1="594" y1="599.2" x2="606" y2="599.2"/><circle cx="591.8" cy="599.2" r="1.9"/><circle cx="608.3" cy="599.2" r="1.9"/>
 </g>
 <!-- icon5 shapes -->
 <g stroke="#a8a8a8" stroke-width="1.7" fill="none">
  <path d="M647 583 L638.8 595.5 H648.5"/>
  <rect x="647" y="580.3" width="11" height="11" rx="1.5"/>
  <path d="M657.5 587.5 A7 7 0 1 1 648.5 595"/>
 </g>
 <!-- icon6 text box -->
 <g stroke="#a8a8a8" stroke-width="1.7" fill="none">
  <rect x="692" y="583" width="16" height="16"/>
 </g>
 <g fill="#3c3c3c" stroke="#a8a8a8" stroke-width="1.6">
  <rect x="689.8" y="580.8" width="4.5" height="4.5"/><rect x="705.8" y="580.8" width="4.5" height="4.5"/>
  <rect x="689.8" y="596.8" width="4.5" height="4.5"/><rect x="705.8" y="596.8" width="4.5" height="4.5"/>
 </g>
 <path d="M696.5 587.5 H704 M700.2 587.5 V595" stroke="#a8a8a8" stroke-width="1.4"/>
 <!-- icon7 -->
 <path d="M749 581.3 H740.3 V601 H760.6 V592.5" stroke="#a8a8a8" stroke-width="1.8" fill="none"/>
 <g fill="#a8a8a8"><rect x="743.5" y="590" width="2" height="7.5"/><rect x="749" y="587.5" width="2" height="10"/><rect x="754.5" y="592.5" width="2" height="5"/></g>
 <circle cx="756.8" cy="584.3" r="3" fill="none" stroke="#a8a8a8" stroke-width="1.8"/>
 <g stroke="#a8a8a8" stroke-width="1.5"><line x1="756.8" y1="579.6" x2="756.8" y2="589"/><line x1="752.4" y1="584.3" x2="761.2" y2="584.3"/><line x1="753.7" y1="581.2" x2="759.9" y2="587.4"/><line x1="759.9" y1="581.2" x2="753.7" y2="587.4"/></g>
 <circle cx="756.8" cy="584.3" r="1.3" fill="#3c3c3c"/>
 <!-- separators -->
 <rect x="786" y="562" width="1" height="54" fill="#333333"/>
 <rect x="1110" y="562" width="1" height="54" fill="#333333"/>
 <!-- active bgs -->
 <rect x="902" y="570" width="43" height="42" rx="5" fill="#4b4b4b"/>
 <rect x="1126" y="570" width="42" height="42" rx="5" fill="#4b4b4b"/>
 <!-- dots -->
 <circle cx="1067.5" cy="591" r="1.7" fill="#a8a8a8"/><circle cx="1073.5" cy="591" r="1.7" fill="#a8a8a8"/><circle cx="1079.5" cy="591" r="1.7" fill="#a8a8a8"/>
 <!-- chart types -->
 <g fill="#ececec"><rect x="1136" y="584" width="1" height="18"/><rect x="1133" y="588" width="7" height="10"/>
 <rect x="1157" y="584" width="1" height="18"/><rect x="1154" y="588" width="7" height="10"/></g>
 <g fill="#62c132"><rect x="1146" y="579" width="1.5" height="18"/><rect x="1143" y="583" width="8" height="11"/></g>
 <g fill="#a8a8a8">
  <rect x="1186" y="583" width="1.8" height="19"/><rect x="1183" y="596.8" width="3" height="1.6"/><rect x="1187.8" y="587.5" width="3" height="1.6"/>
  <rect x="1197" y="579.5" width="1.8" height="19"/><rect x="1193.8" y="582.8" width="3.2" height="1.6"/><rect x="1198.8" y="593" width="3" height="1.6"/>
  <rect x="1206" y="583" width="1.8" height="19"/><rect x="1202.5" y="587.5" width="3.5" height="1.6"/><rect x="1207.8" y="596.8" width="3" height="1.6"/>
 </g>
 <path d="M1234 579.3 V601.2 H1260.8" stroke="#a8a8a8" stroke-width="1.8" fill="none"/>
 <path d="M1235.5 599 L1238 595 L1240.5 594.8 L1245.3 584.5 L1249 591.5 L1251.5 591.8 L1254 595 L1259.5 585.5" stroke="#a8a8a8" stroke-width="1.7" fill="none" stroke-linejoin="round"/>
 <path d="M1283 602.2 L1289 591.5 L1291 591 L1296.2 582 L1299.5 588.5 L1301.5 587.5 L1304 591.5 L1310.8 583 V602.2 Z" fill="#a0a0a0"/>
</svg>
<div class="a nw" style="left:811px;top:581px;font-size:18px;-webkit-text-stroke:0.5px currentColor;color:#a4a4a4">M1</div>
<div class="a nw" style="left:856px;top:581px;font-size:18px;-webkit-text-stroke:0.5px currentColor;color:#a4a4a4">M15</div>
<div class="a nw g" style="left:912px;top:581px;font-size:18px;-webkit-text-stroke:0.5px currentColor">H1</div>
<div class="a nw" style="left:962px;top:581px;font-size:18px;-webkit-text-stroke:0.5px currentColor;color:#a4a4a4">H4</div>
<div class="a nw" style="left:1012px;top:581px;font-size:18px;-webkit-text-stroke:0.5px currentColor;color:#a4a4a4">D1</div>
<div class="a port"></div>
<div class="a nw" style="left:429px;top:640px;font-size:17px;-webkit-text-stroke:0.45px currentColor;color:#f0f0f0">Portfolio</div>
<svg class="a" style="left:1846px;top:640px" width="20" height="20" viewBox="0 0 20 20">
 <path d="M3.5 2.5 L10 9 L16.5 2.5" stroke="#c8c8c8" stroke-width="1.8" fill="none"/>
 <rect x="3" y="15" width="14.5" height="2.2" fill="#c8c8c8"/>
</svg>
<div class="a" style="left:414px;top:678px;width:1469px;height:1px;background:#4d4d4d"></div>
<div class="a" style="left:958px;top:704px;width:382px;height:129px;border:1px solid #4a4a4a;border-radius:5px"></div>
<svg class="a" style="left:978px;top:725px" width="90" height="85" viewBox="978 725 90 85">
 <g stroke="#8a8a8a" stroke-width="2" fill="none">
  <path d="M1008.5 742 V741 Q1008.5 733.5 1016 733.5 H1030 Q1037.5 733.5 1037.5 741 V742"/>
  <rect x="986" y="742.5" width="74" height="49" rx="2.5"/>
  <line x1="986.5" y1="753.5" x2="996.5" y2="743.5"/><line x1="1049.5" y1="743.5" x2="1059.5" y2="753.5"/>
  <line x1="987" y1="786.8" x2="1034" y2="786.8"/>
 </g>
 <circle cx="1047" cy="790.2" r="13.3" fill="#3c3c3c" stroke="#8a8a8a" stroke-width="2"/>
 <g stroke="#62c132" fill="none">
  <line x1="1003.5" y1="778.3" x2="1040" y2="778.3" stroke-width="2.6"/>
  <path d="M1008.8 778 V764 M1013.9 778 V759 M1019 778 V760.5 M1024.5 778 V764 M1029.7 778 V759 M1035.3 778 V754" stroke-width="1.8"/>
  <path d="M1003.6 769.3 L1015.7 757.1 L1023.7 763.2 L1038 750.3" stroke-width="2.2"/>
  <path d="M1044.3 784 V791.5 M1049.3 788.5 V796" stroke-width="1.8"/>
 </g>
 <path d="M1035.5 748.5 H1041 V754 Z" fill="#62c132"/>
 <path d="M1041.6 785.8 L1044.3 782.6 L1047 785.8 Z M1046.6 794 L1049.3 797.3 L1052 794 Z" fill="#62c132"/>
</svg>
<div class="a nw" style="left:1074px;top:737px;font-size:15px;-webkit-text-stroke:0.45px currentColor;color:#f0f0f0">Start trading</div>
<div class="a nw" style="left:1074px;top:759px;font-size:15px;color:#a4a4a4;letter-spacing:-0.1px">You need to <span style="color:#62c132;-webkit-text-stroke:0.45px currentColor;">Sign in</span> to your account.</div>
<div class="a nw" style="left:1074px;top:781px;font-size:15px;color:#a4a4a4;letter-spacing:-0.1px">No account? <span style="color:#62c132;-webkit-text-stroke:0.45px currentColor;">Registration</span></div>
<svg class="a" style="left:1247px;top:782px" width="17" height="17" viewBox="0 0 17 17">
 <path d="M7 2 H2 V15 H15 V10" stroke="#62c132" stroke-width="1.7" fill="none"/>
 <path d="M9 1.5 H15.5 V8 M15.5 1.5 L7.5 9.5" stroke="#62c132" stroke-width="1.7" fill="none"/>
</svg>
<div class="a" style="left:414px;top:858px;width:1469px;height:1px;background:#4d4d4d"></div>
<svg class="a" style="left:1719px;top:878px" width="16.4" height="16.4" viewBox="0 0 24 24"><path fill="#b8b8b8" d="M22 4v-.5C22 2.12 20.88 1 19.5 1S17 2.12 17 3.5V4c-.55 0-1 .45-1 1v4c0 .55.45 1 1 1h5c.55 0 1-.45 1-1V5c0-.55-.45-1-1-1zm-.8 0h-3.4v-.5c0-.94.76-1.7 1.7-1.7s1.7.76 1.7 1.7V4zm-2.28 8c.04.33.08.66.08 1 0 2.080-.8 3.97-2.1 5.39-.26-.81-1-1.39-1.9-1.39h-1v-3c0-.55-.45-1-1-1H7v-2h2c.55 0 1-.45 1-1V8h2c1.1 0 2-.9 2-2V3.460c-.95-.3-1.95-.46-3-.46C5.48 3 1 7.48 1 13s4.48 10 10 10 10-4.48 10-10c0-.34-.02-.67-.05-1h-2.03zM10 20.93c-3.95-.49-7-3.85-7-7.930 0-.62.08-1.21.21-1.790L8 16v1c0 1.1.9 2 2 2v1.930z"/></svg>
<div class="a nw" style="left:1741px;top:877px;font-size:16px;-webkit-text-stroke:0.45px currentColor;color:#f2f2f2">13:50:08 (UTC+2)</div>

</body></html>
